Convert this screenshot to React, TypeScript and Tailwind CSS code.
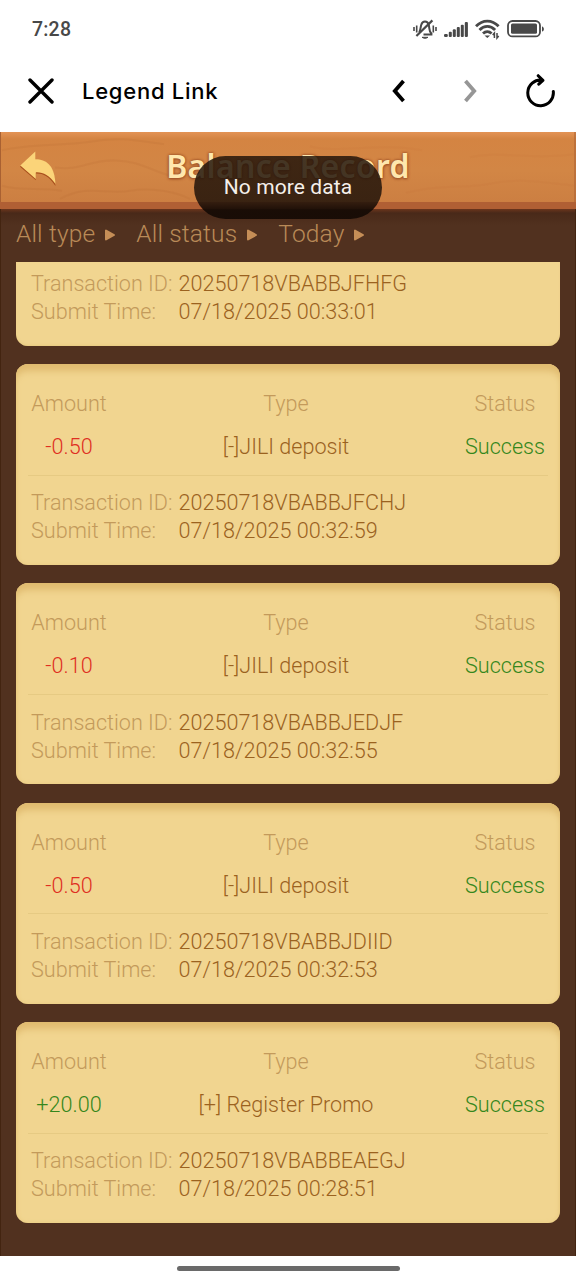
type Entry = { amount: string; type: string; id: string; time: string };

const entries: Entry[] = [
  { amount: "-0.50", type: "[-]JILI deposit", id: "20250718VBABBJFCHJ", time: "07/18/2025 00:32:59" },
  { amount: "-0.10", type: "[-]JILI deposit", id: "20250718VBABBJEDJF", time: "07/18/2025 00:32:55" },
  { amount: "-0.50", type: "[-]JILI deposit", id: "20250718VBABBJDIID", time: "07/18/2025 00:32:53" },
  { amount: "+20.00", type: "[+] Register Promo", id: "20250718VBABBEAEGJ", time: "07/18/2025 00:28:51" },
];

function StatusBar() {
  return (
    <div className="flex h-[58px] shrink-0 items-center justify-between pl-8 pr-[31px] text-[#484848]">
      <span className="pt-[2px] text-[19.5px] font-medium tracking-[0.2px]">7:28</span>
      <div className="flex items-center">
        <svg width="24" height="22" viewBox="0 0 24 22" fill="none" stroke="currentColor" strokeWidth="2">
          <path d="M6.2 14.2c1.4-2 1.2-4.6 2-7.2C8.8 4.9 10.2 3.6 12 3.6s3.2 1.3 3.8 3.4c.8 3-.1 6 2.6 8.4v1.2H10.5" />
          <path d="M3.4 18L19.4 2.4" strokeWidth="2.2" />
          <path d="M1 9v4M3.7 7.5v7M20.3 7.5v7M23 9v4" strokeWidth="1.6" />
          <path d="M9 19.3c1.8 1.3 4.2 1.3 6 0z" fill="currentColor" strokeWidth="1" />
        </svg>
        <svg className="ml-[7px]" width="25" height="18" viewBox="0 0 25 18" fill="currentColor">
          <rect x="0" y="14" width="3.8" height="3" rx="1.2" />
          <rect x="4.8" y="11.8" width="3" height="5.2" rx="1" />
          <rect x="8.8" y="9.2" width="3" height="7.8" rx="1" />
          <rect x="12.8" y="7" width="3" height="10" rx="1" />
          <rect x="16.8" y="4.8" width="3" height="12.2" rx="1" />
          <rect x="20.8" y="2" width="3.1" height="15" rx="1" />
        </svg>
        <svg className="ml-[6px]" width="25" height="22" viewBox="0 0 25 22" fill="none" stroke="currentColor" strokeWidth="2.8">
          <path d="M1 8.2C7.6 1.3 17 1.3 23.6 8.2" />
          <path d="M4.5 12c4.6-4.8 11-4.8 15.6 0" />
          <path d="M8 15.6c2.6-2.5 6-2.5 8.6 0" />
          <path d="M9.5 17.5h5.6L12.3 20z" fill="currentColor" stroke="none" />
          <path d="M19.4 20v-5l-1.7 2M22 15v5l1.7-2" strokeWidth="1.5" />
        </svg>
        <svg className="ml-[7px]" width="38" height="18" viewBox="0 0 38 18" fill="none">
          <rect x="1" y="1" width="32" height="15.4" rx="4.5" stroke="currentColor" strokeWidth="1.8" />
          <rect x="4" y="3.6" width="26" height="10.2" rx="1.5" fill="currentColor" />
          <path d="M35 6.4c2.5.3 2.5 4.8 0 5z" fill="currentColor" />
        </svg>
      </div>
    </div>
  );
}

function BrowserBar() {
  return (
    <div className="flex h-[74px] shrink-0 items-center pb-[8px] pl-7 pr-[20px] text-black">
      <svg width="26" height="26" viewBox="0 0 26 26" fill="none" stroke="currentColor" strokeWidth="3.4" strokeLinecap="round">
        <path d="M2 2l22 22M24 2L2 24" />
      </svg>
      <span className="ml-[28px] flex-1 whitespace-nowrap font-['Inter',sans-serif] text-[22px] font-medium tracking-[0.75px]">
        Legend Link
      </span>
      <svg width="14" height="24" viewBox="0 0 14 24" fill="none" stroke="currentColor" strokeWidth="3.8">
        <path d="M11.5 2L2.8 12l8.7 10" />
      </svg>
      <svg className="ml-[57px] text-[#969696]" width="14" height="24" viewBox="0 0 14 24" fill="none" stroke="currentColor" strokeWidth="3.8">
        <path d="M2.5 2l8.7 10-8.7 10" />
      </svg>
      <svg className="ml-[48px]" width="31" height="34" viewBox="0 0 31 34" fill="none" stroke="currentColor" strokeWidth="3" strokeLinecap="round" strokeLinejoin="round">
        <path d="M28.3 17.5A12.8 12.8 0 1 1 17 6.2M13.2 1.7l4.7 4.7-4.1 3.8" />
      </svg>
    </div>
  );
}

function Header() {
  return (
    <div className="relative flex h-[77px] shrink-0 items-center justify-center border-b-[7px] border-[#b05f34] bg-[linear-gradient(180deg,#e39355_0,#d48442_7px,#d28645_55%,#cc7f42_100%)]">
      <svg className="absolute inset-0 h-full w-full" viewBox="0 0 576 69" preserveAspectRatio="none" fill="none">
        <g stroke="#b96b31" strokeOpacity=".18" strokeWidth="2">
          <path d="M2 18c30-7 62-4 92-9s49 1 70 3M55 35c26 4 34-8 61-7s35 11 58 16" />
          <path d="M60 66c28-15 46-4 70-8s48 2 60 8M2 53c22 6 36 1 60 5" />
          <path d="M310 14c28 8 66-4 112 4M406 60c34-9 60-4 84-9s46-3 84 2M470 25c30-7 60 3 104-3" strokeOpacity=".08" />
        </g>
        <path d="M575 0v69M.5 0v69" stroke="#a96132" strokeWidth="1" />
      </svg>
      <svg className="absolute left-[18px] top-[18px]" width="40" height="40" viewBox="0 0 40 40">
        <path d="M2 16.7L17 2.5v7.4C29 9.3 37 18.5 37.4 36 31 26 25 23.2 17.8 23.4v6.8z" fill="#a9501d" />
        <path d="M2.3 15.5L17.3 1.5v7.8C30 9 37 18 37.5 34 31 25 25 22 17.8 22.4V29z" fill="#fbd479" />
      </svg>
      <h1 className="relative whitespace-nowrap pb-[3px] font-['Noto_Sans',sans-serif] text-[32px] font-semibold leading-[44px] tracking-[0.3px] text-[#ffe7ad] [text-shadow:0_0_2px_#a0542a,0_0_3px_#a0542a,0_1px_3px_#a0542a]">
        Balance Record
      </h1>
    </div>
  );
}

function Filter({ label }: { label: string }) {
  return (
    <div className="flex items-center gap-[9px]">
      <span>{label}</span>
      <svg className="mt-[1px]" width="12" height="14" viewBox="0 0 12 14">
        <path d="M2 2.5v9L10 7z" fill="#c58e57" stroke="#c58e57" strokeWidth="2" strokeLinejoin="round" />
      </svg>
    </div>
  );
}

function Details({ id, time }: { id: string; time: string }) {
  return (
    <dl className="grid grid-cols-[147.5px_1fr] pl-[15px] text-[21.6px] leading-[28px] text-[#9b621f]">
      <dt className="text-[#c39a5b]">Transaction ID:</dt>
      <dd>{id}</dd>
      <dt className="text-[#c39a5b]">Submit Time:</dt>
      <dd>{time}</dd>
    </dl>
  );
}

function Card({ entry }: { entry: Entry }) {
  const amountColor = entry.amount.startsWith("+") ? "text-[#35871c]" : "text-[#df2f22]";
  return (
    <article className="h-[201px] shrink-0 rounded-xl bg-[#f1d590] pt-[26px] shadow-[inset_0_10px_7px_-3px_#e0bb70,inset_0_0_4px_#e9cb80]">
      <div className="mx-3 grid grid-cols-[82px_1fr_86px] gap-y-[15px] text-center leading-[28px] text-[#c39a5b]">
        <span>Amount</span>
        <span>Type</span>
        <span>Status</span>
        <span className={amountColor}>{entry.amount}</span>
        <span className="text-[#9b621f]">{entry.type}</span>
        <span className="text-[#35871c]">Success</span>
      </div>
      <div className="mx-3 mb-[13.6px] mt-[13.8px] h-px bg-[#e6ca83]" />
      <Details id={entry.id} time={entry.time} />
    </article>
  );
}

export default function App() {
  return (
    <div className="relative flex h-[1280px] w-[576px] flex-col overflow-hidden bg-white font-['Roboto',sans-serif]">
      <StatusBar />
      <BrowserBar />
      <Header />
      <main className="flex h-[1047px] shrink-0 flex-col border-x border-[#432410] bg-[linear-gradient(180deg,#6b351c_0,#492919_4px,#51311f_16px,#51311f_100%)] px-[15px] font-light">
        <nav className="flex h-[53px] shrink-0 items-center gap-[20px] pb-[2px] text-[24.5px] tracking-[0.15px] text-[#b98a57]">
          <Filter label="All type" />
          <Filter label="All status" />
          <Filter label="Today" />
        </nav>
        <section className="flex flex-col gap-[18.4px] text-[21.6px]">
          <div className="h-[83.5px] shrink-0 rounded-b-xl bg-[#f1d590] pt-[8px] shadow-[inset_0_-2px_3px_-1px_#e9cb80]">
            <Details id="20250718VBABBJFHFG" time="07/18/2025 00:33:01" />
          </div>
          {entries.map((entry) => (
            <Card key={entry.id} entry={entry} />
          ))}
        </section>
      </main>
      <div className="flex flex-1 justify-center bg-white pt-[10px]">
        <div className="h-[5px] w-[223px] rounded-full bg-[#6a6a6a]" />
      </div>
      <div className="absolute left-[194px] top-[156px] flex h-[63px] w-[188px] items-center justify-center rounded-full bg-[linear-gradient(180deg,rgba(34,20,10,.84)_0,rgba(34,20,10,.86)_72%,rgba(22,11,5,.95)_86%,rgba(22,11,5,.95)_100%)] text-[21px] tracking-[0.1px] text-[#f5efea]">
        No more data
      </div>
    </div>
  );
}
